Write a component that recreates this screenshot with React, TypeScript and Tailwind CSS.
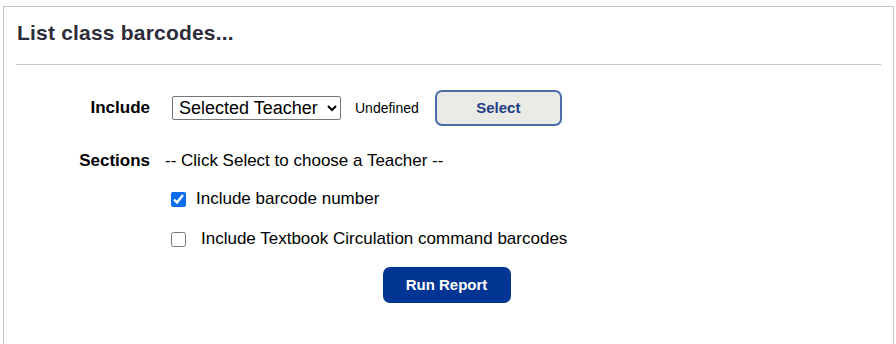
import React from 'react';

export default function App() {
  return (
    <div className="w-[896px] h-[344px] bg-white pt-[6px] pl-[3px] pr-[2px] overflow-hidden font-['Liberation_Sans',Arial,sans-serif]">
      <div className="h-[340px] border border-b-0 border-[#c4c4c4] px-[12px]">
        {/* Heading */}
        <div className="h-[58px] border-b border-[#c8c8c8] pt-[12px]">
          <h1 className="text-[21px] leading-[28px] tracking-[0.2px] font-bold text-[#2d2d3a] pl-[1px]">List class barcodes...</h1>
        </div>

        {/* Include row */}
        <div className="mt-[25px] h-[36px] flex items-center">
          <div className="w-[134px] text-right text-[17px] font-bold text-black">Include</div>
          <select
            defaultValue="teacher"
            className="ml-[22px] h-[24px] w-[169px] border border-[#767676] rounded-[2px] bg-white text-[18px] text-black pl-[2px]"
          >
            <option value="teacher">Selected Teacher</option>
          </select>
          <span className="ml-[14px] text-[14px] text-black">Undefined</span>
          <button className="ml-[16px] h-[36px] w-[127px] rounded-[7px] border-2 border-[#4a6cab] bg-[#ebebe6] text-[15px] font-bold text-[#1f3c87]">
            Select
          </button>
        </div>

        {/* Sections row */}
        <div className="mt-[25px] h-[20px] flex items-center">
          <div className="w-[134px] text-right text-[17px] font-bold text-black">Sections</div>
          <span className="ml-[15px] text-[17px] text-black">-- Click Select to choose a Teacher --</span>
        </div>

        {/* Checkboxes */}
        <div className="pl-[155px]">
          <label className="mt-[18px] h-[20px] flex items-center">
            <input type="checkbox" defaultChecked className="w-[15px] h-[15px] accent-[#0b6cf0] m-0" />
            <span className="ml-[10px] text-[17px] text-black">Include barcode number</span>
          </label>
          <label className="mt-[20px] h-[20px] flex items-center">
            <input type="checkbox" className="w-[15px] h-[15px] m-0" />
            <span className="ml-[15px] text-[17px] text-black">Include Textbook Circulation command barcodes</span>
          </label>
        </div>

        {/* Run report */}
        <div className="mt-[18px] flex justify-center">
          <button className="ml-[-4px] h-[36px] w-[128px] rounded-[7px] bg-[#003594] text-[15px] font-bold text-white">
            Run Report
          </button>
        </div>
      </div>
    </div>
  );
}
